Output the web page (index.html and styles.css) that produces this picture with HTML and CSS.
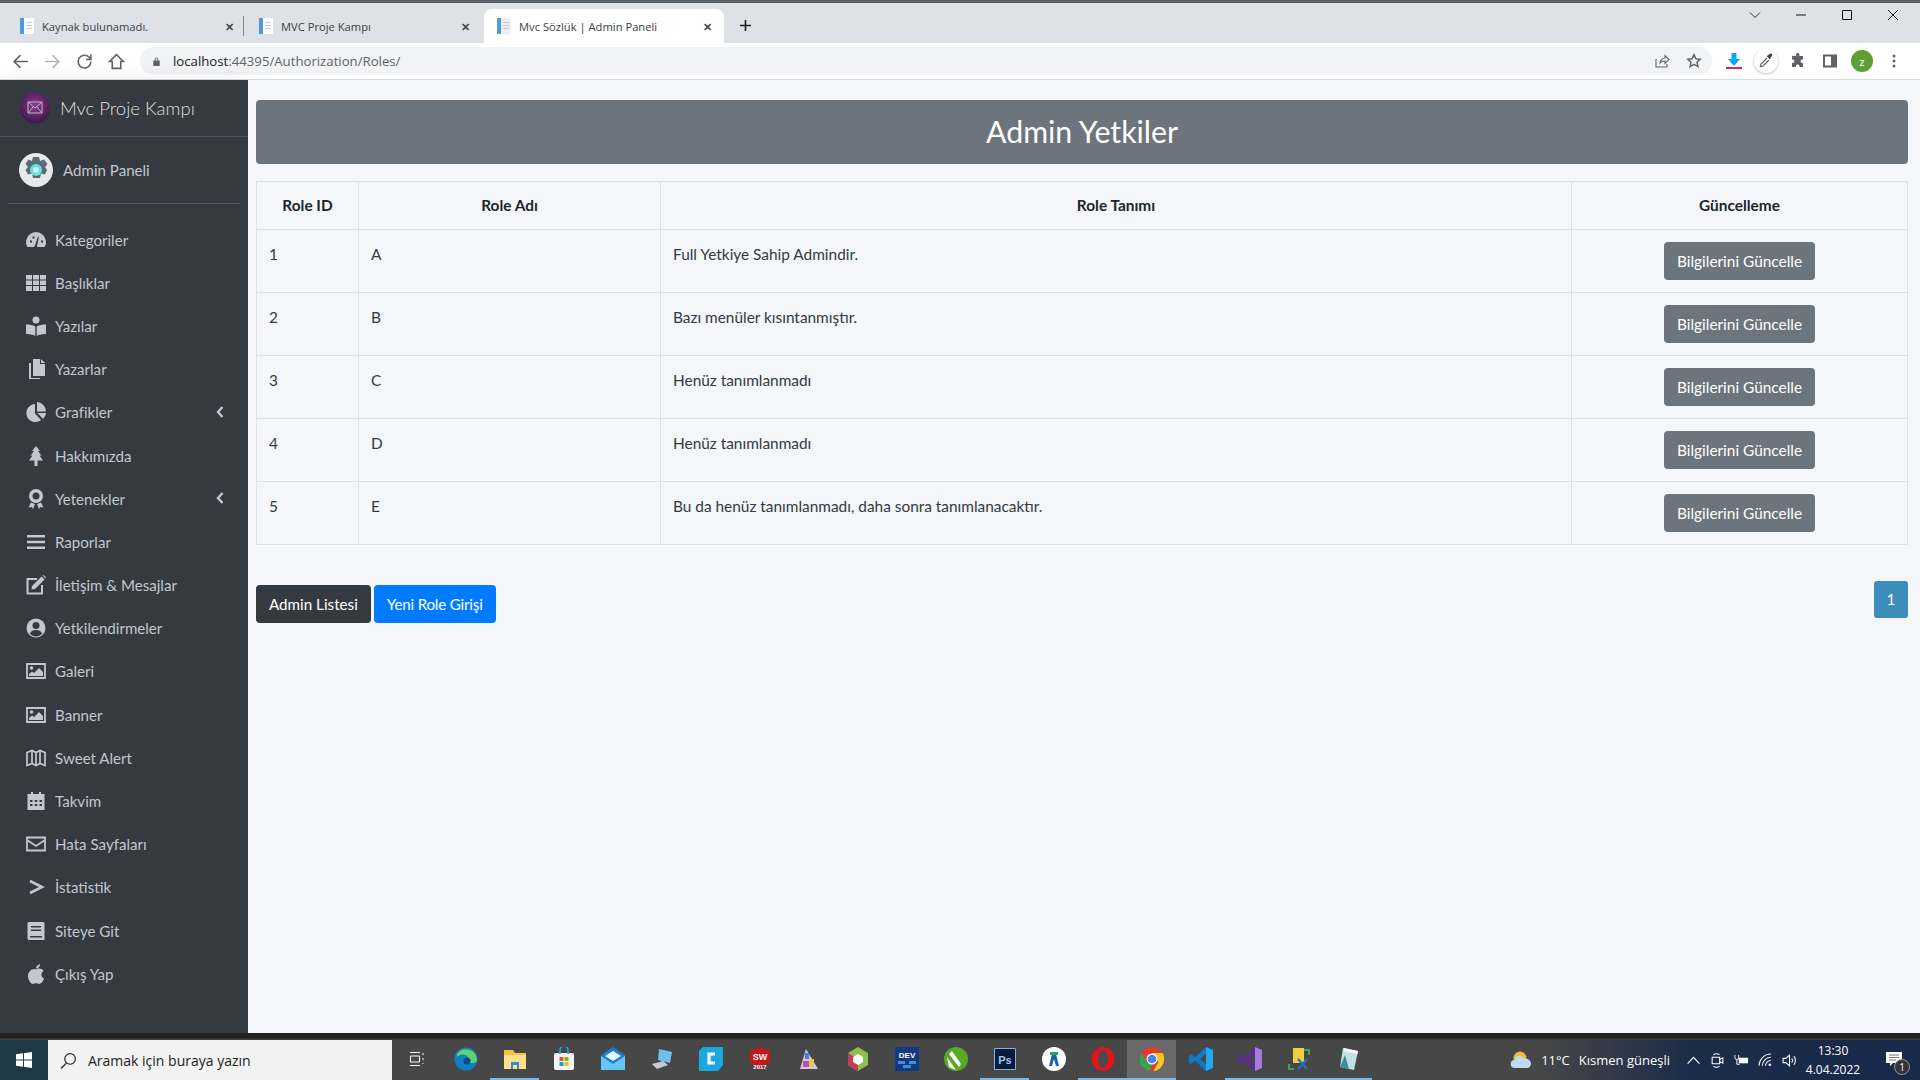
FILE: index.html
```html
<!DOCTYPE html>
<html lang="tr">
<head>
    <meta charset="UTF-8">
    <meta name="viewport" content="width=device-width, initial-scale=1.0">
    <title>Mvc Sözlük | Admin Paneli</title>
    <link rel="stylesheet" href="styles.css">
</head>
<body>
    <!-- Browser tabs -->
    <div class="tabstrip">
        <div class="tab tab-first">
            <svg class="fav" viewBox="0 0 16 16"><path fill="#fff" d="M1 0h14v16H1z"/><path fill="#4a9bd8" d="M1 0h4v16H1z"/><path fill="#c5c9ce" d="M7 4h6v1H7zM7 7h6v1H7zM7 10h6v1H7z"/></svg>
            <span class="tab-title">Kaynak bulunamadı.</span><span class="tab-x">✕</span>
        </div>
        <div class="tab-sep"></div>
        <div class="tab tab-second">
            <svg class="fav" viewBox="0 0 16 16"><path fill="#fff" d="M1 0h14v16H1z"/><path fill="#4a9bd8" d="M1 0h4v16H1z"/><path fill="#c5c9ce" d="M7 4h6v1H7zM7 7h6v1H7zM7 10h6v1H7z"/></svg>
            <span class="tab-title">MVC Proje Kampı</span><span class="tab-x">✕</span>
        </div>
        <div class="tab active">
            <svg class="fav" viewBox="0 0 16 16"><path fill="#eee" d="M1 0h14v16H1z"/><path fill="#4a9bd8" d="M1 0h4v16H1z"/><path fill="#c5c9ce" d="M7 4h6v1H7zM7 7h6v1H7zM7 10h6v1H7z"/></svg>
            <span class="tab-title">Mvc Sözlük | Admin Paneli</span><span class="tab-x">✕</span>
        </div>
        <svg class="new-tab" viewBox="0 0 14 14"><path d="M7 1v12M1 7h12" stroke="#202124" stroke-width="1.8"/></svg>
        <div class="win-controls">
            <svg viewBox="0 0 14 14"><path d="M2 4.500l5 5 5-5" fill="none" stroke="#333" stroke-width="1"/></svg>
            <svg viewBox="0 0 14 14"><path d="M2 7h10" stroke="#111" stroke-width="1"/></svg>
            <svg viewBox="0 0 14 14"><path d="M2.500 2.500h9v9h-9z" fill="none" stroke="#111" stroke-width="1"/></svg>
            <svg viewBox="0 0 14 14"><path d="M2 2l10 10M12 2L2 12" stroke="#111" stroke-width="1"/></svg>
        </div>
    </div>

    <!-- Address bar -->
    <div class="toolbar">
        <div class="nav-buttons">
            <svg viewBox="0 0 16 16"><path d="M15 8H2M8 2L2 8l6 6" fill="none" stroke="#5f6368" stroke-width="1.500"/></svg>
            <svg viewBox="0 0 16 16"><path d="M1 8h13M8 2l6 6-6 6" fill="none" stroke="#b4b7bb" stroke-width="1.500"/></svg>
            <svg viewBox="0 0 16 16"><path d="M14 8a6 6 0 1 1-1.800-4.200L14 5.500M14 1.500v4.500H9.500" fill="none" stroke="#5f6368" stroke-width="1.500"/></svg>
            <svg viewBox="0 0 16 16"><path d="M8 1.500L1.500 8H4v6.500h8V8h2.500z" fill="none" stroke="#5f6368" stroke-width="1.500"/></svg>
        </div>
        <div class="omnibox">
            <svg class="lock" viewBox="0 0 12 12"><path fill="#5f6368" d="M2.500 5h7v6h-7zM4 5V3.500a2 2 0 0 1 4 0V5H7V3.500a1 1 0 0 0-2 0V5z"/></svg>
            <span class="url">localhost<span class="url-path">:44395/Authorization/Roles/</span></span>
            <div class="omni-right">
                <svg viewBox="0 0 16 16"><path d="M2 6v8h11v-3M6 10c0-3 3-5 5-5V2.500L15 6.500l-4 4V8c-2 0-4 .5-5 2z" fill="none" stroke="#5f6368" stroke-width="1.100"/></svg>
                <svg viewBox="0 0 16 16"><path d="M8 1.800l1.900 4 4.300.5-3.200 3 .9 4.300L8 11.400 4.100 13.600 5 9.300l-3.200-3 4.300-.5z" fill="none" stroke="#5f6368" stroke-width="1.500"/></svg>
            </div>
        </div>
        <div class="ext-buttons">
            <svg viewBox="0 0 16 16"><path fill="#03a9f4" d="M5.500 0h5v6H14l-6 7-6-7h3.500z"/><path fill="#e91e63" d="M0 14h16v2H0z"/></svg>
            <span class="picker">
                <svg viewBox="0 0 16 16"><path fill="#3c4043" d="M10 2.500l1.500-1.500a1.500 1.500 0 0 1 2.200 0 1.500 1.500 0 0 1 0 2.200L12.300 4.600l.6.600-1.100 1.100-3-3 1.100-1.100z"/><path fill="none" stroke="#5f6368" stroke-width="1.200" d="M9 5l-6 6-.7 2.700 2.700-.7 6-6"/></svg>
            </span>
            <svg viewBox="0 0 16 16"><path fill="#5f6368" d="M6 1.500a1.800 1.800 0 0 1 3.500 0V3h3.500v3.500h-1a1.800 1.800 0 0 0 0 3.500h1v4H9.500v-1a1.800 1.800 0 0 0-3.500 0v1H2v-4h1a1.800 1.800 0 0 0 0-3.500H2V3h4z"/></svg>
            <svg viewBox="0 0 16 16"><path fill="#5f6368" d="M1 1.500h14v13H1zM3 3.500v9h6v-9z"/></svg>
            <span class="avatar">z</span>
            <svg viewBox="0 0 16 16"><circle cx="8" cy="3" r="1.500" fill="#5f6368"/><circle cx="8" cy="8" r="1.500" fill="#5f6368"/><circle cx="8" cy="13" r="1.500" fill="#5f6368"/></svg>
        </div>
    </div>

    <div class="app">
        <!-- Sidebar -->
        <aside class="sidebar">
            <div class="brand">
                <svg class="brand-logo" viewBox="0 0 30 32"><defs><radialGradient id="lg" cx=".5" cy=".4" r=".6"><stop offset="0" stop-color="#8a3a90"/><stop offset="1" stop-color="#3f1846"/></radialGradient></defs><ellipse cx="15" cy="16" rx="15" ry="15.500" fill="url(#lg)"/><path d="M8 10h14v11H8zM8 10l7 6 7-6M8 21l5-6M22 21l-5-6" fill="none" stroke="#c9b6cc" stroke-width="1"/></svg>
                <span class="brand-text">Mvc Proje Kampı</span>
            </div>
            <div class="user-panel">
                <svg class="user-img" viewBox="0 0 34 34"><circle cx="17" cy="17" r="17" fill="#e6e8ea"/><path fill="#5a6b75" d="M14 4h6l1 4 4-1.500 3.500 4.500-2.500 3 2 3-2 4.500-4-1-1 4.500h-7l-1-4.500-4 1-2.500-4.500 2.500-3-2.500-3L9.500 6.500 13 8z"/><circle cx="17" cy="17" r="6" fill="#6fdcdc"/><circle cx="17" cy="17" r="3" fill="#bff2ee"/></svg>
                <span class="user-name">Admin Paneli</span>
            </div>
            <ul class="side-menu">
                <li><svg class="ico" viewBox="0 0 20 20"><path fill="#c2c7d0" d="M10 2a10 10 0 0 0-10 10c0 2 .5 3.500 1.500 5h17c1-1.500 1.500-3 1.500-5A10 10 0 0 0 10 2z"/><path fill="#343a40" d="M9 15.500l3-9 1 .3-2 9.200a1.500 1.500 0 1 1-2-.5zM4 10.500h2v2H4zM6.500 6.500h2v2h-2zM15 10.500h2v2h-2z"/></svg>Kategoriler</li>
                <li><svg class="ico" viewBox="0 0 20 20"><path fill="#c2c7d0" d="M0 2h6v4.500H0zM7 2h6v4.500H7zM14 2h6v4.500h-6zM0 7.500h6V12H0zM7 7.500h6V12H7zM14 7.500h6V12h-6zM0 13h6v5H0zM7 13h6v5H7zM14 13h6v5h-6z"/></svg>Başlıklar</li>
                <li><svg class="ico" viewBox="0 0 20 20"><circle cx="10" cy="4" r="3.500" fill="#c2c7d0"/><path fill="#c2c7d0" d="M0 8.500c3 0 7 .5 9.300 2V20C7 18.500 3 18 0 18zM20 8.500c-3 0-7 .5-9.300 2V20c2.300-1.500 6.300-2 9.300-2z"/></svg>Yazılar</li>
                <li><svg class="ico" viewBox="0 0 20 20"><path fill="#c2c7d0" d="M7 0h7v5h5v12H7zM15 0l4 4h-4zM5 4v15h9v1H3V4z"/></svg>Yazarlar</li>
                <li><svg class="ico" viewBox="0 0 20 20"><path fill="#c2c7d0" d="M9 2a9 9 0 1 0 6 16l-6-6.500zM11 0v9.500h9A9.500 9.500 0 0 0 11 0zM11.500 11l5.500 6a9 9 0 0 0 3-6z"/></svg>Grafikler<svg class="caret" viewBox="0 0 8 12"><path d="M6.500 1L2 6l4.500 5" fill="none" stroke="#c2c7d0" stroke-width="2.400"/></svg></li>
                <li><svg class="ico" viewBox="0 0 20 20"><path fill="#c2c7d0" d="M10 0l4 5h-2l3.500 4.500h-2L17 14.500h-5.500V20h-3v-5.500H3L6.500 9.500h-2L8 5H6z"/></svg>Hakkımızda</li>
                <li><svg class="ico" viewBox="0 0 20 20"><path fill="#c2c7d0" d="M10 0a7 7 0 1 1 0 14 7 7 0 0 1 0-14zm0 3.500a3.500 3.500 0 1 0 0 7 3.500 3.500 0 0 0 0-7zM5 13.500l-2.500 5 3-.5 1.500 2 2-5zM15 13.500l2.500 5-3-.5-1.500 2-2-5z"/></svg>Yetenekler<svg class="caret" viewBox="0 0 8 12"><path d="M6.500 1L2 6l4.500 5" fill="none" stroke="#c2c7d0" stroke-width="2.400"/></svg></li>
                <li><svg class="ico" viewBox="0 0 20 20"><path fill="#c2c7d0" d="M1 3h18v2.500H1zM1 8.800h18v2.500H1zM1 14.500h18V17H1z"/></svg>Raporlar</li>
                <li><svg class="ico" viewBox="0 0 20 20"><path fill="none" stroke="#c2c7d0" stroke-width="2" d="M11 4H1.500v14.500H16V10"/><path fill="#c2c7d0" d="M6 11L15.500 1.500l3 3L9 14l-3.500.5zM16.500.5l1-.5 2.500 2.500-.5 1z"/></svg>İletişim &amp; Mesajlar</li>
                <li><svg class="ico" viewBox="0 0 20 20"><circle cx="10" cy="10" r="9.500" fill="#c2c7d0"/><circle cx="10" cy="7.500" r="3.500" fill="#343a40"/><path fill="#343a40" d="M3.800 15.500c1-2.500 3.500-3.500 6.200-3.500s5.200 1 6.200 3.500a8 8 0 0 1-12.400 0z"/></svg>Yetkilendirmeler</li>
                <li><svg class="ico" viewBox="0 0 20 20"><path fill="none" stroke="#c2c7d0" stroke-width="1.800" d="M1 3h18v14H1z"/><circle cx="5.500" cy="7" r="1.800" fill="#c2c7d0"/><path fill="#c2c7d0" d="M3 15v-2l3-2.500 2 1.500 5-5 4 4v4z"/></svg>Galeri</li>
                <li><svg class="ico" viewBox="0 0 20 20"><path fill="none" stroke="#c2c7d0" stroke-width="1.800" d="M1 3h18v14H1z"/><circle cx="5.500" cy="7" r="1.800" fill="#c2c7d0"/><path fill="#c2c7d0" d="M3 15v-2l3-2.500 2 1.500 5-5 4 4v4z"/></svg>Banner</li>
                <li><svg class="ico" viewBox="0 0 20 20"><path fill="none" stroke="#c2c7d0" stroke-width="1.700" d="M1 4.500l5-2 4 2 4-2 5 2v13l-5-2-4 2-4-2-5 2zM6 2.500v13M10 4.500v13M14 2.500v13"/></svg>Sweet Alert</li>
                <li><svg class="ico" viewBox="0 0 20 20"><path fill="#c2c7d0" d="M1.500 3H5V1h2v2h6V1h2v2h3.500v16h-17zM4 9v2h2.500V9zm4.700 0v2h2.600V9zm4.800 0v2H16V9zM4 13v2h2.500v-2zm4.700 0v2h2.600v-2zm4.800 0v2H16v-2z"/></svg>Takvim</li>
                <li><svg class="ico" viewBox="0 0 20 20"><path fill="none" stroke="#c2c7d0" stroke-width="1.800" d="M1 3.500h18v13H1zM1 6l9 6 9-6"/></svg>Hata Sayfaları</li>
                <li><svg class="ico" viewBox="0 0 20 20"><path fill="none" stroke="#c2c7d0" stroke-width="2.600" d="M4 4l12 6-12 6"/></svg>İstatistik</li>
                <li><svg class="ico" viewBox="0 0 20 20"><path fill="#c2c7d0" d="M3 1h14a1.500 1.500 0 0 1 1.500 1.500V19H3a1.500 1.500 0 0 1-1.500-1.500v-15A1.500 1.500 0 0 1 3 1zM5 5v1.500h10V5zm0 3.500V10h10V8.500zm-1 6.500v1.500h12V15z"/></svg>Siteye Git</li>
                <li><svg class="ico" viewBox="0 0 20 20"><path fill="#c2c7d0" d="M10 5.500C12 4 16 4 17.500 7c-3 2-2.500 6 .5 7.500-1 3-3 5.500-5 5.500-1.200 0-2-.7-3-.7s-1.800.7-3 .7C4.500 20 2 15.500 2 12c0-5 5-8 8-6.500zM10 4.500c0-2 1.500-4 4-4.500 0 2.500-1.500 4.500-4 4.500z"/></svg>Çıkış Yap</li>
            </ul>
        </aside>

        <!-- Page content -->
        <main class="content">
            <h1 class="page-title">Admin Yetkiler</h1>
            <table class="roles">
                <thead>
                    <tr>
                        <th class="col-id">Role ID</th>
                        <th class="col-name">Role Adı</th>
                        <th>Role Tanımı</th>
                        <th class="col-btn">Güncelleme</th>
                    </tr>
                </thead>
                <tbody>
                    <tr><td>1</td><td>A</td><td>Full Yetkiye Sahip Admindir.</td><td class="cell-btn"><a class="btn btn-gray">Bilgilerini Güncelle</a></td></tr>
                    <tr><td>2</td><td>B</td><td>Bazı menüler kısıntanmıştır.</td><td class="cell-btn"><a class="btn btn-gray">Bilgilerini Güncelle</a></td></tr>
                    <tr><td>3</td><td>C</td><td>Henüz tanımlanmadı</td><td class="cell-btn"><a class="btn btn-gray">Bilgilerini Güncelle</a></td></tr>
                    <tr><td>4</td><td>D</td><td>Henüz tanımlanmadı</td><td class="cell-btn"><a class="btn btn-gray">Bilgilerini Güncelle</a></td></tr>
                    <tr><td>5</td><td>E</td><td>Bu da henüz tanımlanmadı, daha sonra tanımlanacaktır.</td><td class="cell-btn"><a class="btn btn-gray">Bilgilerini Güncelle</a></td></tr>
                </tbody>
            </table>
            <div class="actions">
                <a class="btn btn-dark">Admin Listesi</a>
                <a class="btn btn-blue">Yeni Role Girişi</a>
                <span class="page-num">1</span>
            </div>
        </main>
    </div>

    <div class="os-strip"></div>

    <!-- Windows taskbar -->
    <div class="taskbar">
        <div class="start">
            <svg viewBox="0 0 16 16"><path fill="#fff" d="M0 2.300l7-1v6.300H0zM8 1.200L16 0v7.600H8zM0 8.400h7v6.300l-7-1zM8 8.400h8V16l-8-1.200z"/></svg>
        </div>
        <div class="search">
            <svg viewBox="0 0 16 16"><circle cx="9.500" cy="6.500" r="5" fill="none" stroke="#222" stroke-width="1.100"/><path d="M6 10.500L1 15.500" stroke="#222" stroke-width="1.200"/></svg>
            <span>Aramak için buraya yazın</span>
        </div>
        <div class="apps">
            <div class="app-slot"><svg class="task-view" viewBox="0 0 16 16"><path fill="none" stroke="#fff" d="M1 1.500h10M1 14.500h10M1.500 5h9v6h-9zM14 2v2M14 7v2M14 12v1"/></svg></div>
            <div class="app-slot"><svg viewBox="0 0 24 24"><circle cx="12" cy="12" r="11.500" fill="#0f7ec4"/><path fill="#5fd36b" d="M3 7a11 11 0 0 1 20 6c0 2-2 3-4 3h-5c1-3 1-7-3-8-3-1-6 0-8 2z"/><circle cx="13" cy="14" r="3.500" fill="#0c4a86"/></svg></div>
            <div class="app-slot on"><svg viewBox="0 0 24 24"><path fill="#f5c242" d="M1 3h9l2 3h11v16H1z"/><path fill="#ffe08a" d="M1 8h22v14H1z"/><path fill="#2a8fd6" d="M8 15h8v7h-2v-4h-4v4H8z"/></svg></div>
            <div class="app-slot"><svg viewBox="0 0 24 24"><rect x="2" y="6" width="20" height="17" rx="2" fill="#f5f5f5"/><path d="M8 7V3a4 4 0 0 1 8 0v4" fill="none" stroke="#2aa6e8" stroke-width="1.600"/><path fill="#f25022" d="M7.500 10h4v4h-4z"/><path fill="#7fba00" d="M12.500 10h4v4h-4z"/><path fill="#00a4ef" d="M7.500 15h4v4h-4z"/><path fill="#ffb900" d="M12.500 15h4v4h-4z"/></svg></div>
            <div class="app-slot"><svg viewBox="0 0 24 24"><path fill="#1a7fd0" d="M12 0l12 8v15H0V8z"/><path fill="#66c6f5" d="M0 9l12 8 12-8v14H0z"/><path fill="#eaf6fd" d="M4 9l8 5 8-5-8-5z"/></svg></div>
            <div class="app-slot"><svg viewBox="0 0 24 24"><path fill="#6fc0ee" d="M9 2l13 3-2 11-12-3z"/><path fill="#c8ccd0" d="M2 17l11-3 5 4-11 4z"/></svg></div>
            <div class="app-slot"><svg viewBox="0 0 24 24"><path fill="#19a9e0" d="M4 0h20v18l-5 6H0V4z"/><path d="M16 7h-6v9h6" fill="none" stroke="#fff" stroke-width="3.200"/></svg></div>
            <div class="app-slot"><svg viewBox="0 0 24 24"><path fill="#c4161c" d="M12 0l10 4v11l-10 7L2 15V4z"/><text x="12" y="13" class="sw">SW</text><text x="12" y="22" class="sw-year">2017</text></svg></div>
            <div class="app-slot"><svg viewBox="0 0 24 24"><path fill="#c9c9e8" d="M3 22L9 2l12 20z"/><path fill="#c04fa0" d="M6 14h6v6H6z"/><path fill="#e8c64f" d="M12 12h5v8h-5z"/><path fill="#5a78d8" d="M8 6h4v6H8z"/></svg></div>
            <div class="app-slot"><svg viewBox="0 0 24 24"><path fill="#8fbf4f" d="M12 0l10 6v12l-10 6L2 18V6z"/><path fill="#c9385c" d="M2 18l10 6V12L2 6z"/><path fill="#fff" d="M12 7l5 3v5l-5 3-5-3v-5z"/></svg></div>
            <div class="app-slot"><svg viewBox="0 0 24 24"><path fill="#123a7c" d="M0 0h24v24H0z"/><text x="12" y="11" class="dev">DEV</text><path fill="#3f8de0" d="M3 14h7v3H3zM14 14h7v3h-7zM8 18h8v3H8z"/></svg></div>
            <div class="app-slot"><svg viewBox="0 0 24 24"><circle cx="12" cy="12" r="12" fill="#5aa82a"/><path fill="#fff" d="M3 10l9 13-7-3zM8 4l9 13-2 3L5 7z"/></svg></div>
            <div class="app-slot on"><svg viewBox="0 0 24 24"><path fill="#0a1a3a" d="M1 1h22v22H1z"/><path fill="none" stroke="#7fb2e8" d="M1.500 1.500h21v21h-21z"/><text x="12" y="16.500" class="ps">Ps</text></svg></div>
            <div class="app-slot"><svg viewBox="0 0 24 24"><circle cx="12" cy="12" r="12" fill="#fff"/><path fill="#1d5fb0" d="M7 19l3-12h4l3 12h-3l-2-7-2 7z"/><path fill="#2aa36a" d="M8 5h8v3H8z"/></svg></div>
            <div class="app-slot on"><svg viewBox="0 0 24 24"><ellipse cx="12" cy="12" rx="11.500" ry="12" fill="#e0161b"/><ellipse cx="12" cy="12" rx="5" ry="9" fill="#4a4a4a"/></svg></div>
            <div class="app-slot on current"><svg viewBox="0 0 24 24"><circle cx="12" cy="12" r="12" fill="#e33b2e"/><path fill="#f9c81e" d="M12 6h10.500a12 12 0 0 1-9 18l5-9z"/><path fill="#2fa84f" d="M1.500 6l6 10 5 2-3.500 5.800A12 12 0 0 1 1.500 6z"/><circle cx="12" cy="12" r="5.500" fill="#fff"/><circle cx="12" cy="12" r="4.300" fill="#4285f4"/></svg></div>
            <div class="app-slot"><svg viewBox="0 0 24 24"><path fill="#0b7ac8" d="M17 0l7 3v18l-7 3L6 13.500 2 17l-2-1V8l2-1 4 3.500zM17 7l-6 5 6 5z"/><path fill="#25a7ea" d="M17 0l7 3v18l-7 3z"/></svg></div>
            <div class="app-slot on"><svg viewBox="0 0 24 24"><path fill="#5c2d91" d="M17 0l7 3v18l-7 3L6 13.500 2 17l-2-1V8l2-1 4 3.500zM17 7l-6 5 6 5z"/><path fill="#a77ae0" d="M17 0l7 3v18l-7 3z"/></svg></div>
            <div class="app-slot on"><svg viewBox="0 0 24 24"><path fill="#f2cf3e" d="M6 1h11v15H6z"/><path fill="none" stroke="#3aa655" stroke-width="2" d="M17 3h5v5M2 17v5h5"/><path stroke="#1f6fc4" stroke-width="2.200" d="M11 12l9 10M20 12l-9 10"/></svg></div>
            <div class="app-slot on"><svg viewBox="0 0 24 24"><path fill="#bfe3e0" d="M7 1l15 3-4 19-14-3z"/><path fill="#3e8e99" d="M4 20l5-12 4 14z"/><path fill="#f4f4f4" d="M8 1l14 3-.5 3L7.500 4z"/></svg></div>
        </div>
        <div class="tray">
            <svg class="weather" viewBox="0 0 22 18"><circle cx="10" cy="7" r="6.500" fill="#f5b942"/><path fill="#bcdcf5" d="M5 17a4 4 0 0 1-.5-8 5 5 0 0 1 9.500-1 4.500 4.500 0 0 1 4 9z"/></svg>
            <span class="temp">11°C</span>
            <span class="forecast">Kısmen güneşli</span>
            <svg class="t-ico t-caret" viewBox="0 0 14 14"><path d="M1.500 10L7 4l5.500 6" fill="none" stroke="#fff" stroke-width="1.100"/></svg>
            <svg class="t-ico" viewBox="0 0 14 14"><path fill="none" stroke="#fff" d="M2 4h7v6H2zM9 6l3-1.500v5L9 8M3 1.500c2-1 4-1 6 0M3 12.500c2 1 4 1 6 0"/></svg>
            <svg class="t-ico" viewBox="0 0 16 14"><path fill="#fff" d="M5 4h10v6H5z"/><path fill="none" stroke="#fff" d="M1 1v3a2 2 0 0 0 4 0V1M3 6v5h3"/></svg>
            <svg class="t-ico" viewBox="0 0 14 14"><path fill="none" stroke="#fff" d="M1 12A11 11 0 0 1 12 1M4 12A8 8 0 0 1 12 4M7 12a5 5 0 0 1 5-5"/><circle cx="11" cy="11" r="1.200" fill="#fff"/></svg>
            <svg class="t-ico" viewBox="0 0 14 14"><path fill="none" stroke="#fff" d="M1 5h2.500L7 2v10L3.500 9H1zM9 5c1 1 1 3 0 4M11 3c2 2 2 6 0 8"/></svg>
            <div class="clock"><span>13:30</span><span>4.04.2022</span></div>
            <div class="notify">
                <svg viewBox="0 0 16 16"><path fill="#fff" d="M0 0h16v11H7l-3 3v-3H0z"/><path stroke="#777" d="M3 3h10M3 5.500h10M3 8h7"/></svg>
                <span class="notify-count">1</span>
            </div>
        </div>
    </div>
</body>
</html>
```

FILE: styles.css
```css
* {
    box-sizing: border-box;
}
html, body {
    height: 100%;
}
body {
    margin: 0;
    font-family: Lato, "Noto Sans", sans-serif;
    font-size: 15.4px;
    color: #212529;
    display: flex;
    flex-direction: column;
    overflow: hidden;
}

/* browser chrome */
.tabstrip {
    height: 43px;
    flex: none;
    background-color: #dee1e6;
    border-top: 3px solid #5c6066;
    display: flex;
    align-items: flex-end;
    font-family: "Open Sans", sans-serif;
    font-size: 11.2px;
    color: #3c4043;
}
.tab {
    height: 34px;
    display: flex;
    align-items: center;
}
.tab-first {
    width: 243px;
    padding: 0 9px 0 19px;
}
.tab-second {
    width: 240px;
    padding: 0 14px 0 14px;
}
.tab.active {
    width: 240px;
    background-color: #fff;
    border-radius: 8px 8px 0 0;
    padding: 0 12px;
}
.tab-sep {
    width: 1px;
    height: 20px;
    margin: 0 0 7px 0;
    background-color: #80868b;
}
.fav {
    width: 16px;
    height: 16px;
    margin-right: 7px;
}
.tab-title {
    flex: 1;
}
.tab-x {
    font-size: 11px;
    font-weight: bold;
    color: #45484c;
}
.new-tab {
    width: 13px;
    height: 13px;
    margin: 0 0 11px 15px;
}
.win-controls {
    margin-left: auto;
    align-self: flex-start;
    display: flex;
    gap: 32px;
    padding: 5px 20px 0 0;
}
.win-controls svg {
    width: 14px;
    height: 14px;
}
.toolbar {
    height: 37px;
    flex: none;
    background-color: #fff;
    border-bottom: 1px solid #dadce0;
    display: flex;
    align-items: center;
}
.nav-buttons {
    width: 140px;
    display: flex;
    gap: 15px;
    padding-left: 12px;
}
.nav-buttons svg {
    width: 17px;
    height: 17px;
}
.omnibox {
    width: 1572px;
    height: 28px;
    background-color: #f1f3f4;
    border-radius: 14px;
    display: flex;
    align-items: center;
    padding-left: 11px;
    font-family: "Open Sans", sans-serif;
    font-size: 13.2px;
    color: #202124;
}
.lock {
    width: 11px;
    height: 11px;
    margin-right: 11px;
}
.url-path {
    color: #5f6368;
}
.omni-right {
    margin-left: auto;
    display: flex;
    gap: 16px;
    padding-right: 10px;
}
.omni-right svg {
    width: 16px;
    height: 16px;
}
.ext-buttons {
    display: flex;
    align-items: center;
    gap: 16px;
    padding-left: 14px;
}
.ext-buttons svg {
    width: 16px;
    height: 16px;
}
.picker {
    width: 24px;
    height: 24px;
    margin: 0 -4px;
    border-radius: 50%;
    background-color: #fff;
    box-shadow: 0 1px 3px rgba(0, 0, 0, .25);
    display: flex;
    align-items: center;
    justify-content: center;
}
.avatar {
    width: 22px;
    height: 22px;
    margin: 0 -3px;
    border-radius: 50%;
    background-color: #5f9e33;
    color: #fff;
    font-size: 11px;
    display: flex;
    align-items: center;
    justify-content: center;
}

/* admin layout */
.app {
    flex: 1;
    display: flex;
    min-height: 0;
}
.sidebar {
    width: 248px;
    flex: none;
    background-color: #343a40;
    color: #c2c7d0;
    font-size: 15.1px;
    box-shadow: 0 14px 28px rgba(0, 0, 0, .25), 0 10px 10px rgba(0, 0, 0, .22);
}
.brand {
    height: 57px;
    display: flex;
    align-items: center;
    padding-left: 20px;
    border-bottom: 1px solid #4b545c;
    font-size: 18.5px;
    font-weight: 300;
    color: rgba(255, 255, 255, .85);
}
.brand-logo {
    width: 30px;
    height: 32px;
    margin-right: 10px;
}
.user-panel {
    height: 67px;
    margin: 0 8px;
    padding: 0 0 1px 11px;
    display: flex;
    align-items: center;
    border-bottom: 1px solid #4f5962;
}
.user-img {
    width: 34px;
    height: 34px;
    margin-right: 10px;
}
.side-menu {
    list-style-type: none;
    margin: 14px 0 0;
    padding: 0;
}
.side-menu li {
    height: 43.2px;
    display: flex;
    align-items: center;
    padding-left: 26px;
    position: relative;
}
.ico {
    width: 20px;
    height: 20px;
    margin-right: 9px;
}
.caret {
    width: 8px;
    height: 12px;
    position: absolute;
    right: 24px;
    top: 15px;
}

/* page content */
.content {
    flex: 1;
    background-color: #f4f6f9;
    padding: 20px 12px 0 8px;
}
.page-title {
    height: 64px;
    margin: 0 0 17px;
    background-color: #6c757d;
    border-radius: 4px;
    color: #fff;
    font-size: 30.3px;
    font-weight: 400;
    line-height: 63px;
    text-align: center;
}
.roles {
    width: 100%;
    table-layout: fixed;
    border-collapse: collapse;
}
.roles th, .roles td {
    border: 1px solid #dee2e6;
    padding: 12px;
    line-height: 24px;
    vertical-align: top;
}
.roles th {
    height: 48px;
    padding: 11px 12px;
    text-align: center;
    font-weight: bold;
}
.roles td {
    height: 63px;
    color: #343a40;
}
.col-id {
    width: 102px;
}
.col-name {
    width: 302px;
}
.col-btn {
    width: 336px;
}
.roles .cell-btn {
    text-align: center;
    padding: 12px 12px 0;
}
.btn {
    display: inline-block;
    height: 38px;
    padding: 0 13px;
    border-radius: 4px;
    color: #fff;
    line-height: 38px;
    cursor: pointer;
}
.btn-gray {
    background-color: #6c757d;
}
.btn-dark {
    background-color: #343a40;
}
.btn-blue {
    background-color: #007bff;
    letter-spacing: -0.2px;
}
.actions {
    display: flex;
    gap: 3px;
    margin-top: 36px;
    align-items: flex-start;
    font-size: 15.2px;
}
.actions .btn {
    margin-top: 4px;
}
.page-num {
    width: 34px;
    height: 37px;
    margin-left: auto;
    background-color: #3c8dbc;
    border-radius: 3px;
    color: #fff;
    text-align: center;
    line-height: 37px;
}

/* windows taskbar */
.os-strip {
    height: 7px;
    flex: none;
    background: linear-gradient(180deg, #222 0%, #222 70%, #4a4a4a 100%);
}
.taskbar {
    height: 40px;
    flex: none;
    display: flex;
    align-items: stretch;
    background: linear-gradient(90deg, #474747 0%, #474747 80%, #1c2c48 88%, #18294a 100%);
    font-family: "Open Sans", sans-serif;
    color: #fff;
}
.start {
    width: 48px;
    background-color: #1f3a46;
    display: flex;
    align-items: center;
    justify-content: center;
}
.start svg {
    width: 16px;
    height: 16px;
}
.search {
    width: 344px;
    background-color: #f2f2f2;
    color: #222;
    display: flex;
    align-items: center;
    padding-left: 12px;
    font-size: 14px;
}
.search svg {
    width: 17px;
    height: 17px;
    margin-right: 11px;
}
.apps {
    display: flex;
}
.app-slot {
    width: 49px;
    display: flex;
    align-items: center;
    justify-content: center;
    border-bottom: 2px solid transparent;
}
.app-slot svg {
    width: 24px;
    height: 24px;
}
.app-slot .task-view {
    width: 16px;
    height: 16px;
}
.app-slot.on {
    border-bottom-color: #76b9ed;
}
.app-slot.current {
    background-color: #6a6a6a;
}
.sw, .sw-year, .dev, .ps {
    fill: #fff;
    text-anchor: middle;
    font-family: "Liberation Sans", sans-serif;
    font-weight: bold;
}
.sw {
    font-size: 9px;
}
.sw-year {
    font-size: 6px;
}
.dev {
    font-size: 8px;
}
.ps {
    font-size: 11px;
    fill: #9fc8f0;
}
.tray {
    margin-left: auto;
    display: flex;
    align-items: center;
    font-size: 13px;
}
.weather {
    width: 22px;
    height: 18px;
    margin-right: 9px;
}
.temp {
    margin-right: 9px;
}
.forecast {
    margin-right: 16px;
}
.t-ico {
    width: 15px;
    height: 15px;
    margin-right: 9px;
}
.clock {
    width: 70px;
    margin-left: -8px;
    display: flex;
    flex-direction: column;
    align-items: center;
    font-size: 12px;
    line-height: 19px;
}
.notify {
    width: 42px;
    margin-left: 10px;
    position: relative;
    height: 100%;
}
.notify svg {
    width: 16px;
    height: 16px;
    position: absolute;
    left: 8px;
    top: 12px;
}
.notify-count {
    position: absolute;
    left: 16px;
    top: 19px;
    width: 16px;
    height: 16px;
    border-radius: 50%;
    background-color: #333;
    border: 1px solid #999;
    font-size: 10px;
    line-height: 14px;
    text-align: center;
}
```
